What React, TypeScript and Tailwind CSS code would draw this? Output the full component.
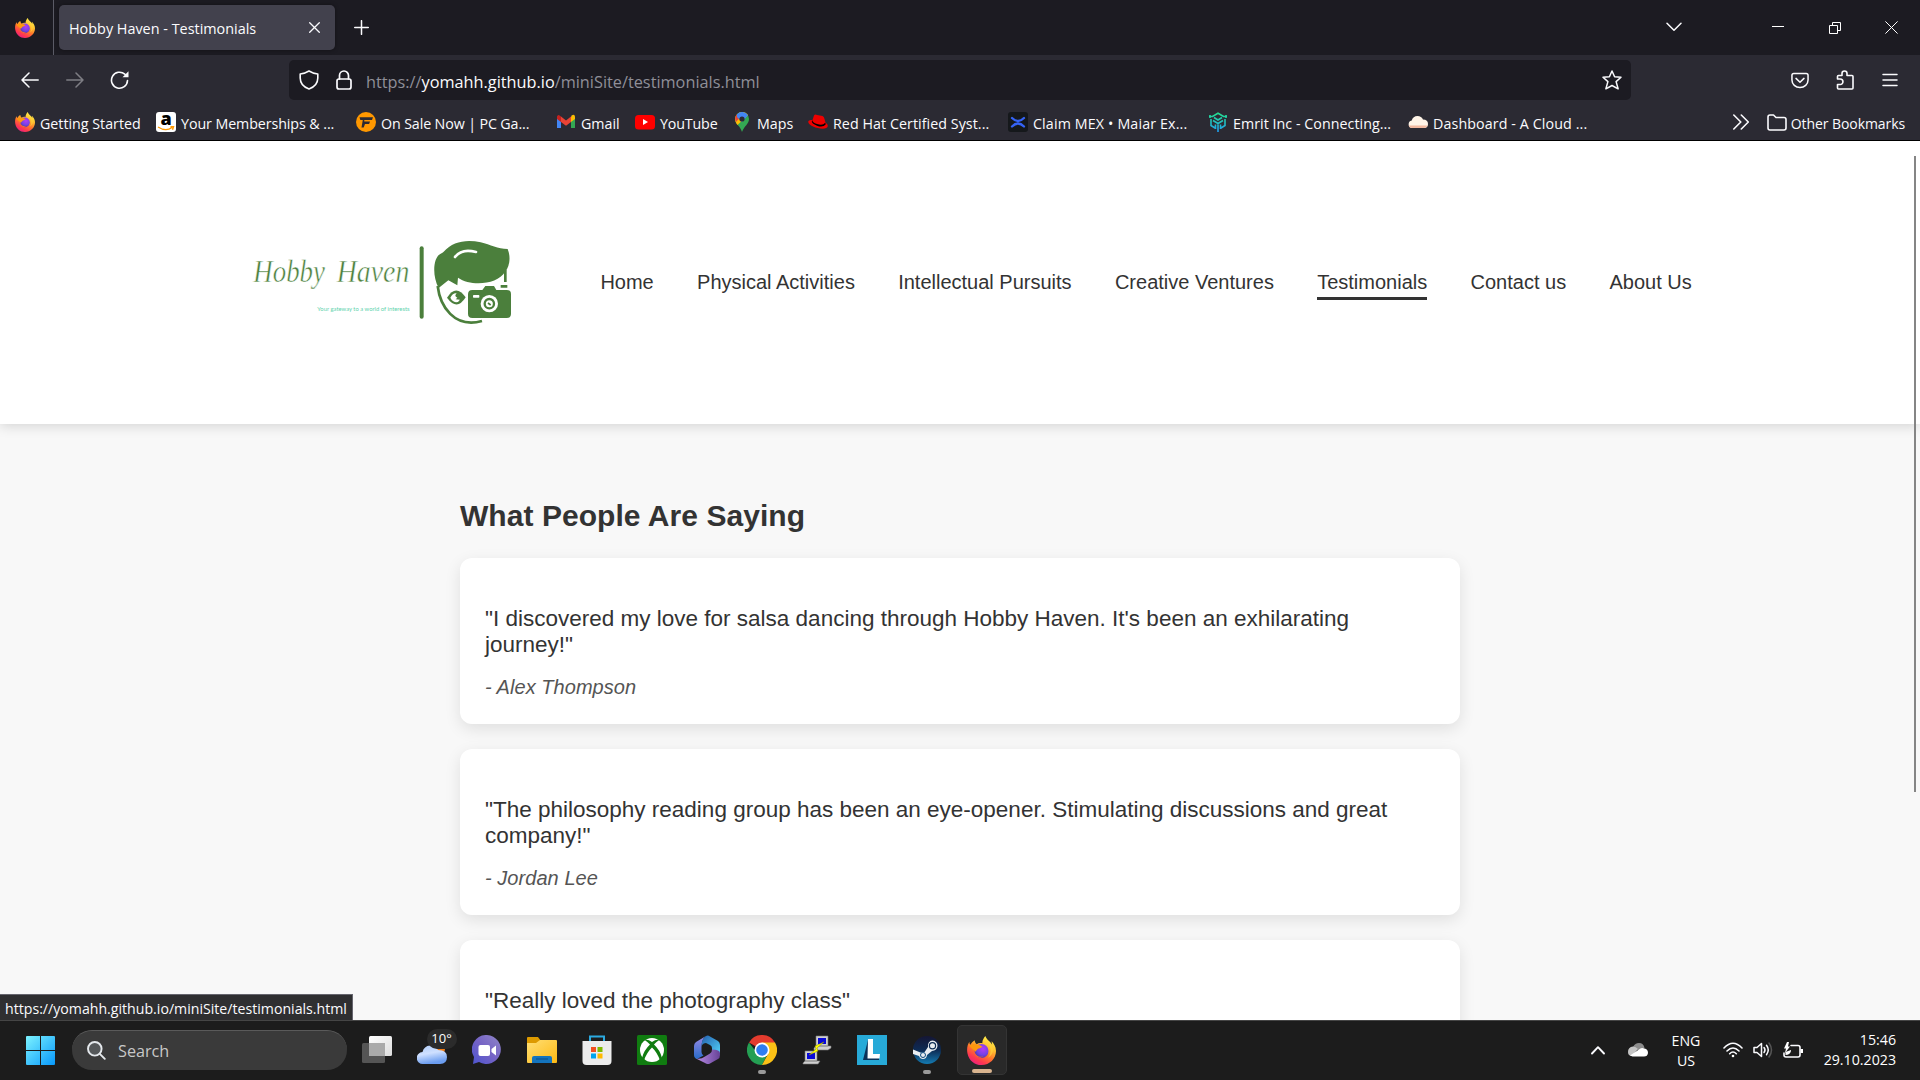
import type { ReactNode } from "react";

function Firefox({ id, className }: { id: string; className: string }) {
  return (
    <svg viewBox="0 0 60 60" className={className}>
      <defs>
        <linearGradient id={id + "a"} x1="0.8" y1="0.05" x2="0.25" y2="1">
          <stop offset="0" stopColor="#fff44f" />
          <stop offset="0.3" stopColor="#ffc02f" />
          <stop offset="0.55" stopColor="#ff7a2a" />
          <stop offset="0.8" stopColor="#ff3750" />
          <stop offset="1" stopColor="#e81e85" />
        </linearGradient>
        <radialGradient id={id + "b"} cx="0.6" cy="0.35" r="0.7">
          <stop offset="0" stopColor="#b43cf5" />
          <stop offset="0.6" stopColor="#7542e5" />
          <stop offset="1" stopColor="#4b3a9e" />
        </radialGradient>
      </defs>
      <path
        d="M38 0C34 5 31 10 32 15C27 14 23 15 20 17C17 15 16 11 16 9C12 11 9 15 7 18C5 17 5 13 5 12C1 18-1 26 1 36C4 50 15 60 30 60C47 60 60 47 60 31C60 22 55 15 51 11C51 14 52 16 52 18C50 12 40 8 38 0Z"
        fill={`url(#${id}a)`}
      />
      <circle cx="30" cy="31" r="14.5" fill={`url(#${id}b)`} />
      <path d="M5 20C11 15 18 16 21 18C27 18 30 21 32 22C29 25 24 25 22 27C21 30 18 30 17 33C16 28 10 28 5 20Z" fill="#ff980e" />
      <path d="M15 30C17 42 27 45 34 42C27 49 14 43 15 30Z" fill="#ff6a2d" />
      <path d="M43 14C51 23 51 37 43 45C56 39 57 24 47 15Z" fill="#ffd43a" opacity=".65" />
    </svg>
  );
}

function Logo() {
  return (
    <svg viewBox="60 45 810 285" className="h-[95px] w-[270px] shrink-0">
      <g fill="#4b7f3c">
        <text x="70" y="187" fontSize="97" fontFamily="Liberation Serif" fontStyle="italic" stroke="#fff" strokeWidth="1.6" textLength="215" lengthAdjust="spacingAndGlyphs">Hobby</text>
        <text x="320" y="187" fontSize="97" fontFamily="Liberation Serif" fontStyle="italic" stroke="#fff" strokeWidth="1.6" textLength="218" lengthAdjust="spacingAndGlyphs">Haven</text>
        <rect x="569" y="79" width="12" height="217" rx="6" />
        <path d="M626 204C606 168 609 112 632 101C636 98 639 98 641 95C668 64 710 57 752 67C782 74 803 87 833 87C843 111 839 140 825 156C803 193 724 201 684 173L682 196L655 181Z" />
        <path d="M822 150h8v36h-8zM812 195h20v8h-20z" />
        <path d="M757 210L766 198H792L799 210H830Q843 210 843 223V281Q843 294 830 294H727Q714 294 714 281V223Q714 210 727 210Z" />
        <path d="M651 233Q678 191 707 232Q681 274 651 233Z" />
      </g>
      <path d="M623 198C630 258 672 326 756 303" fill="none" stroke="#4b7f3c" strokeWidth="8" />
      <path d="M675 111C690 91 716 90 738 96" fill="none" stroke="#fff" strokeWidth="8" strokeLinecap="round" />
      <path d="M661 233Q669 218 680 220Q671 229 682 233L677 238L690 239Q682 252 670 244Q664 240 661 233Z" fill="#fff" />
      <rect x="729" y="225" width="19" height="8" rx="2" fill="#fff" />
      <circle cx="778" cy="251" r="26" fill="#fff" />
      <circle cx="778" cy="251" r="14" fill="none" stroke="#4b7f3c" strokeWidth="7" />
      <path d="M774 249l8 6" stroke="#4b7f3c" strokeWidth="5" />
      <text x="262" y="273" fontSize="17" fontFamily="Lato" fill="#5fd3ae" textLength="277" lengthAdjust="spacingAndGlyphs">Your gateway to a world of interests</text>
    </svg>
  );
}

const line = { fill: "none", stroke: "#fbfbfe", strokeLinecap: "round", strokeLinejoin: "round" } as const;

function TabStrip() {
  return (
    <div className="flex h-[55px] items-center bg-[#1c1b22]">
      <Firefox id="ft" className="ml-[15px] h-5 w-5" />
      <div className="ml-[18px] h-[55px] w-px bg-[#5b5b66]" />
      <div className="ml-[5px] flex h-[45px] w-[276px] items-center rounded-[5px] bg-[#42414d] pl-[10px] shadow-[0_0_4px_rgba(0,0,0,0.4)]">
        <span className="w-[240px] whitespace-nowrap pt-[3px] text-[14.4px]">Hobby Haven - Testimonials</span>
        <svg className="h-[11px] w-[11px]" viewBox="0 0 11 11" {...line} strokeWidth="1.3"><path d="M.7.7l9.6 9.6M10.3.7L.7 10.3" /></svg>
      </div>
      <svg className="ml-[19px] h-[15px] w-[15px]" viewBox="0 0 15 15" {...line} strokeWidth="1.5"><path d="M7.5.7v13.6M.7 7.5h13.6" /></svg>
      <div className="flex-1" />
      <svg className="mr-[90px] h-[10px] w-[16px] -translate-y-px" viewBox="0 0 16 10" {...line} strokeWidth="1.5"><path d="M1 1.3l7 7 7-7" /></svg>
      <div className="mr-[45px] h-px w-3 -translate-y-px bg-white" />
      <svg className="mr-[44px] h-3 w-3" viewBox="0 0 12 12" fill="none" stroke="#fff"><path d="M.5 3.5h8v8h-8zM3.5 3.5v-3h8v8h-3" /></svg>
      <svg className="mr-[22px] h-[13px] w-[13px]" viewBox="0 0 13 13" fill="none" stroke="#fff"><path d="M.4.4l12.2 12.2M12.6.4L.4 12.6" /></svg>
    </div>
  );
}

function Toolbar() {
  return (
    <div className="flex h-[50px] items-center bg-[#2b2a33]">
      <svg className="ml-[21px] h-4 w-[18px]" viewBox="0 0 18 16" {...line} strokeWidth="1.5"><path d="M17.2 8H1M8 1L1 8l7 7" /></svg>
      <svg className="ml-[27px] h-4 w-[18px] opacity-40" viewBox="0 0 18 16" {...line} strokeWidth="1.5"><path d="M.8 8H17M10 1l7 7-7 7" /></svg>
      <svg className="ml-[26px] h-5 w-5" viewBox="0 0 20 20" {...line} strokeWidth="1.6"><path d="M17.5 10.5a8 8 0 1 1-2.7-6.3l2.4 2" /><path d="M18.500 1.300v6h-6z" fill="#fbfbfe" stroke="none" /></svg>
      <div className="ml-[159px] flex h-10 w-[1342px] items-center rounded-[5px] bg-[#1c1b22] pl-[10px]">
        <svg className="h-5 w-5" viewBox="0 0 20 20" {...line} strokeWidth="1.6"><path d="M10 1Q6 3.4 1.2 4V8C1.2 13 4.5 17 10 19C15.500 17 18.800 13 18.800 8V4Q14 3.400 10 1Z" /></svg>
        <svg className="ml-[17px] h-5 w-4" viewBox="0 0 16 20" {...line} strokeWidth="1.7"><rect x="1" y="9" width="14" height="10" rx="2" /><path d="M3.500 9V5.500a4.500 4.500 0 0 1 9 0V9" /></svg>
        <span className="ml-[14px] whitespace-nowrap pt-[5px] text-[16.3px] text-[#8f8f98]">https://<span className="text-[#fbfbfe]">yomahh.github.io</span>/miniSite/testimonials.html</span>
        <div className="flex-1" />
        <svg className="mr-[9px] h-5 w-5" viewBox="0 0 20 20" {...line} strokeWidth="1.5"><path d="M10 1l2.600 5.700 6.400.6-4.900 4.300 2 7.200L10 15.500l-6.100 3.300 2-7.200L1 7.300l6.400-.6z" /></svg>
      </div>
      <svg className="ml-[160px] h-[17px] w-[18px]" viewBox="0 0 19 17" {...line} strokeWidth="1.6"><path d="M3 1h13a2 2 0 0 1 2 2v5a8.500 8 0 0 1-17 0V3a2 2 0 0 1 2-2zM5.300 6.300l4.200 4 4.200-4" /></svg>
      <svg className="ml-[27px] h-5 w-[18px]" viewBox="0 0 18 20" {...line} strokeWidth="1.6"><path d="M1.500 9V6.500Q1.500 5.500 2.500 5.500H6V3.500a2.500 2.500 0 0 1 5 0v2h5Q17 5.500 17 6.500V18Q17 19 16 19H2.500Q1.500 19 1.500 18v-3.500h2.700a2.700 2.700 0 0 0 0-5.500z" /></svg>
      <svg className="ml-[28px] h-[14px] w-4" viewBox="0 0 16 14" {...line} strokeWidth="1.500"><path d="M1 1.500h14M1 7h14M1 12.500h14" /></svg>
    </div>
  );
}

function Bookmark({ width, icon, children }: { width: string; icon: ReactNode; children: ReactNode }) {
  return (
    <div className={"flex shrink-0 items-center whitespace-nowrap text-[14.25px] " + width}>
      <div className="mr-[5px] flex h-5 w-5 shrink-0 items-center justify-center">{icon}</div>
      <span className="pt-[3px]">{children}</span>
    </div>
  );
}

function Bookmarks() {
  return (
    <div className="flex h-9 items-center border-b border-black bg-[#2b2a33] pb-[1px] pl-[15px]">
      <Bookmark width="w-[141px]" icon={<Firefox id="fb" className="h-5 w-5" />}>Getting Started</Bookmark>
      <Bookmark
        width="w-[200px]"
        icon={
          <svg viewBox="0 0 20 20" className="h-5 w-5 overflow-visible">
            <rect width="20" height="20" rx="3" fill="#fff" />
            <text x="10" y="13" fontSize="18" fontWeight="800" fontFamily="Open Sans" textAnchor="middle" fill="#000">a</text>
            <path d="M2 15q8 5 14 .500M14.500 14.800h3l-1 3" fill="none" stroke="#ff9900" strokeWidth="1.400" />
          </svg>
        }
      >
        <span className="tracking-[-0.08px]">Your Memberships &amp; ...</span>
      </Bookmark>
      <Bookmark width="w-[200px]" icon={<svg viewBox="0 0 20 20"><circle cx="10" cy="10" r="10" fill="#ff9800" /><path d="M3.500 5.300h13.500l-1 2.700H8.300v1.600h5.700l-.9 2.500H9L7.700 15.500H5.500L6.800 8H4.300z" fill="#2b2a33" /></svg>}><span className="tracking-[-0.12px]">On Sale Now | PC Ga...</span></Bookmark>
      <Bookmark width="w-[79px]" icon={<svg viewBox="0 0 20 20"><path d="M1 5v11h4V9z" fill="#4285f4" /><path d="M15 9v7h4V5z" fill="#34a853" /><path d="M15 5.300V10l4-3V4.500Q18.500 1.500 15.500 3.500z" fill="#fbbc04" /><path d="M5 4.500V10l5 3.800L15 10V4.500l-5 4z" fill="#ea4335" /><path d="M1 4.500V7l4 3V4.500Q2 1.500 1 4.500z" fill="#c5221f" /></svg>}>Gmail</Bookmark>
      <Bookmark width="w-[97px]" icon={<svg viewBox="0 0 20 20"><rect y="3" width="20" height="14.500" rx="3.500" fill="#f00" /><path d="M8 7v6l5-3z" fill="#fff" /></svg>}><span className="tracking-[-0.15px]">YouTube</span></Bookmark>
      <Bookmark width="w-[76px]" icon={<svg viewBox="0 0 20 20"><path d="M10 0a7 7 0 0 1 7 7c0 5-5 7-7 13C8.500 14 3 12 3 7a7 7 0 0 1 7-7z" fill="#34a853" /><path d="M5 2.500A7 7 0 0 1 16 3L5.500 13C3 10 2 6 5 2.500z" fill="#fbbc04" /><path d="M4.700 2.600L8 5.500 4 10Q2 6 4.700 2.600z" fill="#ea4335" /><path d="M5 2.200A7 7 0 0 1 16 3.300L10 10 5 5z" fill="#4285f4" /><circle cx="10" cy="7" r="2.600" fill="#2b2a33" /></svg>}>Maps</Bookmark>
      <Bookmark width="w-[200px]" icon={<svg viewBox="0 0 20 20"><path d="M4.500 8L6 3.500Q7 2 9 3L14.500 4Q16 4.500 16.500 7L17.500 10.500Q20 12 19.800 14C19 20 0 15 .2 9.500Q.5 7.500 4.500 8z" fill="#e00" /><path d="M4.500 8.200Q4 10.500 9 12Q15 13.800 17.200 10.800L17.800 12.200Q15 16 9 13.700Q3.500 11.500 3.800 9z" fill="#000" /></svg>}><span className="tracking-[0.06px]">Red Hat Certified Syst...</span></Bookmark>
      <Bookmark width="w-[200px]" icon={<svg viewBox="0 0 20 20"><rect width="20" height="20" rx="3" fill="#15181b" /><path d="M4 6q6 6 12 0M4 14.500q6-6 12 0" fill="none" stroke="#3563f5" strokeWidth="2.300" strokeLinecap="round" /></svg>}><span className="tracking-[0.14px]">Claim MEX • Maiar Ex...</span></Bookmark>
      <Bookmark
        width="w-[200px]"
        icon={
          <svg viewBox="0 0 20 20" fill="none" stroke="url(#em)" strokeWidth="1.600">
            <defs><linearGradient id="em" x1="0" y1="0" x2="0" y2="20" gradientUnits="userSpaceOnUse"><stop stopColor="#24e28a" /><stop offset="1" stopColor="#1f9df0" /></linearGradient></defs>
            <path d="M1 4.500h3.500L10 1.300l5.500 3.200H19M2 3v3M18 3v3M6 5.500L10 8l4-2.500M3 7v6.500l4 2.500M17 7v6.500L13 16M5 8.500l5 3 5-3M10 11.500V20M7.500 12.500V17M12.500 12.500V17" />
          </svg>
        }
      >
        <span className="tracking-[0.04px]">Emrit Inc - Connecting...</span>
      </Bookmark>
      <Bookmark width="w-[200px]" icon={<svg viewBox="0 0 20 20"><path d="M4 16a3.800 3.800 0 0 1-.3-7.500Q5 4 9.500 4q4 0 5.500 3.500Q20 7.500 20 12q0 4-4 4z" fill="#fff4e8" /><path d="M.6 13.500h19Q18.500 16 16 16H4Q1.500 16 .6 13.500z" fill="#f2b9a0" /></svg>}><span className="tracking-[0.11px]">Dashboard - A Cloud ...</span></Bookmark>
      <div className="flex-1" />
      <svg className="mr-[18px] h-4 w-4 shrink-0" viewBox="0 0 16 16" {...line} strokeWidth="1.600"><path d="M.8 1l7 7-7 7M8.300 1l7 7-7 7" /></svg>
      <svg className="mr-1 h-[17px] w-[20px] shrink-0" viewBox="0 0 20 17" {...line} strokeWidth="1.600"><path d="M1 3q0-2 2-2h3.500l2.500 2.500h8q2 0 2 2V14q0 2-2 2H3q-2 0-2-2z" /></svg>
      <span className="mr-[15px] whitespace-nowrap pt-[2px] text-[14px] tracking-[-0.08px]">Other Bookmarks</span>
    </div>
  );
}

const navItems = ["Home", "Physical Activities", "Intellectual Pursuits", "Creative Ventures", "Testimonials", "Contact us", "About Us"];

const testimonials = [
  { quote: "\"I discovered my love for salsa dancing through Hobby Haven. It's been an exhilarating journey!\"", author: "- Alex Thompson" },
  { quote: "\"The philosophy reading group has been an eye-opener. Stimulating discussions and great company!\"", author: "- Jordan Lee" },
  { quote: "\"Really loved the photography class\"", author: "" },
];

function Page() {
  return (
    <div className="relative h-[879px] overflow-hidden bg-[#f8f8f8] font-['Liberation_Sans'] text-[#333]">
      <header className="relative flex h-[283px] items-center bg-white pl-[250px] shadow-[0_2px_12px_rgba(0,0,0,0.15)]">
        <Logo />
        <nav className="ml-[80.400px] flex gap-[43.300px] text-[20px] leading-[23px]">
          {navItems.map((n) => (
            <a key={n} className={n === "Testimonials" ? "relative whitespace-nowrap after:absolute after:top-[26px] after:left-0 after:h-[3px] after:w-full after:bg-[#333]" : "whitespace-nowrap"}>{n}</a>
          ))}
        </nav>
      </header>
      <main className="mx-auto w-[1000px] pt-[74px]">
        <h1 className="text-[30px] leading-[35px] font-bold tracking-[0.05px]">What People Are Saying</h1>
        <div className="mt-[25px] flex flex-col gap-[25px]">
          {testimonials.map((t) => (
            <article key={t.quote} className="h-[166px] rounded-[12px] bg-white px-[25px] pt-[48px] shadow-[0_5px_16px_rgba(0,0,0,0.1)]">
              <p className="text-[22.500px] leading-[26px]">{t.quote}</p>
              <p className="mt-[18px] text-[20px] leading-[23px] tracking-[0.05px] text-[#555] italic">{t.author}</p>
            </article>
          ))}
        </div>
      </main>
      <div className="absolute top-[15px] left-[1914px] h-[636px] w-[2px] bg-[#858585]" />
      <div className="absolute bottom-0 left-0 flex h-[26px] w-[353px] items-center border-t border-r border-[#66656e] bg-[#2f2f31] pl-[5px] font-['Open_Sans'] text-[14.150px] whitespace-nowrap text-[#fbfbfe]"><span className="pt-[3px]">https://yomahh.github.io/miniSite/testimonials.html</span></div>
    </div>
  );
}

function TaskItem({ children, active, mark }: { children: ReactNode; active?: boolean; mark?: string }) {
  return (
    <div className="flex w-[55px] shrink-0 justify-center">
      <div className={active ? "relative flex h-[50px] w-[50px] items-center justify-center rounded-[5px] border border-[#343434] bg-[#292929]" : "relative flex h-[50px] w-[50px] items-center justify-center"}>
        {children}
        {mark && <div className={"absolute bottom-px h-1 rounded-full " + mark} />}
      </div>
    </div>
  );
}

function Taskbar() {
  const s = "h-[30px] w-[30px]";
  return (
    <div className="flex h-[60px] items-center border-t border-[#454545] bg-[#1c1c1c] pb-px text-white">
      <svg className="ml-[26px] h-[29px] w-[29px]" viewBox="0 0 29 29"><defs><linearGradient id="win" x2="1" y2="1"><stop stopColor="#7df3ff" /><stop offset="1" stopColor="#0798fb" /></linearGradient></defs><path d="M1 0h13v14H0V1Q0 0 1 0zM15 0h13q1 0 1 1v13H15zM0 15h14v14H1q-1 0-1-1zM15 15h14v13q0 1-1 1H15z" fill="url(#win)" /></svg>
      <div className="ml-[17px] flex h-10 w-[275px] items-center rounded-full border-t border-[#5a5a5a] bg-[#3a3a3a] pl-[15px]">
        <svg className="h-[19px] w-[19px]" viewBox="0 0 19 19" fill="#55585a" stroke="#e4e8ec" strokeWidth="1.900" strokeLinecap="round"><circle cx="7.800" cy="7.800" r="6.800" /><path d="M12.800 12.800l5 5" /></svg>
        <span className="ml-3 pt-[2px] text-[16.200px] text-[#c8c8c8]">Search</span>
      </div>
      <div className="ml-[2px] flex">
        <TaskItem>
          <svg className={s} viewBox="0 0 30 30"><defs><linearGradient id="tv" x2="1" y2="1"><stop stopColor="#fff" /><stop offset="1" stopColor="#ddd" /></linearGradient></defs><rect x="7" y="1" width="23" height="20" rx="1.500" fill="url(#tv)" /><rect y="8" width="23" height="20" rx="1.500" fill="#555" /><path d="M7 8h16v13H7z" fill="#aaa" /></svg>
        </TaskItem>
        <TaskItem>
          <svg className={s} viewBox="0 0 30 30"><defs><linearGradient id="cl" x2="0.300" y2="1"><stop stopColor="#afcbf7" /><stop offset=".5" stopColor="#cfe0ff" /><stop offset="1" stopColor="#6b9df0" /></linearGradient></defs><circle cx="22" cy="14" r="6" fill="#ef7d1a" /><path d="M6 29a6 6 0 0 1-.5-12Q7 11 13 10.500Q19 11 21 15q9 0 9 7t-7 7z" fill="url(#cl)" /></svg>
          <div className="absolute top-[4px] left-[20px] flex h-5 w-[30px] items-center justify-center rounded-full bg-[#2b2b2b] text-[13px]">10°</div>
        </TaskItem>
        <TaskItem>
          <svg className={s} viewBox="0 0 30 30"><defs><linearGradient id="ch" x1="1" x2="0" y2="1"><stop stopColor="#9187c8" /><stop offset=".5" stopColor="#7563c5" /><stop offset="1" stopColor="#4d55d0" /></linearGradient></defs><path d="M15 0a14.500 14.500 0 1 1-8 27L1 29l1-7A14.500 14.500 0 0 1 15 0z" fill="url(#ch)" /><rect x="6.500" y="10" width="11.500" height="11" rx="2" fill="#fff" /><path d="M19.500 14l4.500-3.500v10L19.500 17z" fill="#fff" /></svg>
        </TaskItem>
        <TaskItem>
          <svg className={s} viewBox="0 0 30 30"><defs><linearGradient id="fo" x2="1" y2="1"><stop stopColor="#ffdf75" /><stop offset="1" stopColor="#fdb913" /></linearGradient></defs><path d="M0 3q0-1 1-1h10l3 4v6H0z" fill="#dd9a00" /><path d="M0 8h9l4-3h16q1 0 1 1v21q0 1-1 1H1q-1 0-1-1z" fill="url(#fo)" /><path d="M5 28v-5q0-2 2-2h16q2 0 2 2v5z" fill="#1474bd" /><path d="M9 24h12" stroke="#0a4c87" /></svg>
        </TaskItem>
        <TaskItem>
          <svg className={s} viewBox="0 0 30 30"><path d="M8 7V1.500h14V7" fill="none" stroke="#2ba9df" strokeWidth="2" /><path d="M.5 6h29v20q0 4-4 4h-21q-4 0-4-4z" fill="#ececec" /><path d="M9 12h5v5H9z" fill="#f25022" /><path d="M15.500 12h5v5h-5z" fill="#7fba00" /><path d="M9 18.500h5v5H9z" fill="#00a4ef" /><path d="M15.500 18.500h5v5h-5z" fill="#ffb900" /></svg>
        </TaskItem>
        <TaskItem>
          <svg className={s} viewBox="0 0 30 30"><rect width="30" height="30" rx="1.500" fill="#107c10" /><circle cx="15" cy="15" r="12" fill="#fff" /><path d="M7 4.500Q12 4 15 7Q18 4 23 4.500Q19 7 17 9.500Q23 15 25 23L23 25.500Q20 17 15 12.500Q10 17 7 25.500L5 23Q7 15 13 9.500Q10 6.500 7 4.500z" fill="#107c10" /></svg>
        </TaskItem>
        <TaskItem>
          <svg className={s} viewBox="0 0 30 30"><defs><linearGradient id="m1" x2="0" y2="1"><stop stopColor="#9b8ae6" /><stop offset="1" stopColor="#286bc9" /></linearGradient><linearGradient id="m2" x2="1" y2="1"><stop stopColor="#235fae" /><stop offset="1" stopColor="#54d6fb" /></linearGradient><linearGradient id="m3" x2="1"><stop stopColor="#bb8ee8" /><stop offset="1" stopColor="#664296" /></linearGradient></defs><path d="M14 1L4 7Q2 8.500 2 11V20q0 3 3 4l6.500-3.500Q9.500 19 9.500 17V12Q9.500 4 14 1z" fill="url(#m1)" /><path d="M14 1q2-1 4 .500L26 6q2 1.500 2 4V20L20 16V13q0-2-2-3l-4-2Q11 8 9.500 11Q10 3 14 1z" fill="url(#m2)" /><path d="M28 18v2q0 3-2 4l-8 4.500q-2 1-4 0L4 23.500q5 1 9-2l5-3q2-1 2-4 8 0 8 3.500z" fill="url(#m3)" /></svg>
        </TaskItem>
        <TaskItem mark="w-2 bg-[#9a9a9a]">
          <svg className={s} viewBox="0 0 30 30"><path d="M15 15L2 7.500A15 15 0 0 1 28 7.500z" fill="#e33b2e" /><path d="M2 7.500A15 15 0 0 0 15 30L21 18 10 18z" fill="#249f53" /><path d="M28 7.500H15L21 19 15 30A15 15 0 0 0 28 7.500z" fill="#fbc116" /><circle cx="15" cy="15" r="7.500" fill="#fff" /><circle cx="15" cy="15" r="5.800" fill="#2e7df0" /></svg>
        </TaskItem>
        <TaskItem>
          <svg className={s} viewBox="0 0 30 30"><g fill="#d0d0d0" stroke="#777" strokeWidth=".6"><path d="M14 1h12v10H14zM12 13l2-2h15v2l-3 2H12zM3 16h12v10H3zM1 28l2-2h15l-2 3H1z" /></g><path d="M16 3h8v6h-8zM5 18h8v6H5z" fill="#0808d8" /><path d="M22 7l-9 4 1 3-7 6 9-4-1-3z" fill="#ff0" stroke="#8a8a00" strokeWidth=".5" /></svg>
        </TaskItem>
        <TaskItem>
          <svg className={s} viewBox="0 0 30 30"><path d="M0 0h30v30H0z" fill="#27aad8" /><path d="M11 5L6 25H22V21H11z" fill="#0b3158" /><path d="M11 4h5v15h7l-.500 4.500H10.500z" fill="#fff" /></svg>
        </TaskItem>
        <TaskItem mark="w-2 bg-[#9a9a9a]">
          <svg className={s} viewBox="0 0 30 30"><defs><linearGradient id="st" x2="0" y2="1"><stop stopColor="#151634" /><stop offset=".5" stopColor="#0d2b54" /><stop offset="1" stopColor="#147bb2" /></linearGradient></defs><circle cx="15" cy="15" r="14" fill="url(#st)" /><path d="M1 14.500l8 3.200q2-1 3.500-.500L16 12Q15.500 6 20.500 5.500Q25.500 6 25.500 11Q25 15.500 20 16l-5 4Q14.500 24 11 24 8 24 7 21L1 19z" fill="#e9edf1" /><circle cx="20.500" cy="10.800" r="3.100" fill="#e9edf1" stroke="#0d2b54" strokeWidth="1.200" /><circle cx="11" cy="20" r="2.500" fill="none" stroke="#0d4a7c" /></svg>
        </TaskItem>
        <TaskItem active mark="w-5 bg-[#d9b48f]"><Firefox id="fk" className="h-[29px] w-[29px]" /></TaskItem>
      </div>
      <div className="flex-1" />
      <svg className="mr-[23px] h-[10px] w-[14px]" viewBox="0 0 14 10" {...line} strokeWidth="1.900"><path d="M1 8.500l6-6.300 6 6.300" /></svg>
      <svg className="mr-[18px] h-[14px] w-5" viewBox="0 0 20 14"><path d="M5 4Q7 0 11 0q4.500 0 5.500 5L12 8z" fill="#8c8c8c" /><path d="M0 9Q0 4 5 3.500Q8 3.500 10 6l-6 7Q0 13 0 9z" fill="#c4c4c4" /><path d="M2 12.500L11 6.500Q13 4 16.500 5.500Q20 6 20 10q-.500 3.500-4 3.500H4.500z" fill="#fff" /></svg>
      <div className="w-10 pt-px text-center text-[14.200px] leading-5">ENG<br />US</div>
      <svg className="ml-[17px] h-4 w-5" viewBox="0 0 20 16" {...line} strokeWidth="1.600"><path d="M1 6q9-9.500 18 0M4 9q6-6 12 0M6.700 11.700q3.300-3.300 6.600 0" /><circle cx="10" cy="14" r="1.300" fill="#fff" stroke="none" /></svg>
      <svg className="ml-[10px] h-4 w-5" viewBox="0 0 20 16" {...line} strokeWidth="1.500"><path d="M1 5.500h3L8.500 1.500v13L4 10.500H1zM11 5.500q2 2.500 0 5M13.500 3.300q3.500 4.700 0 9.400" /><path d="M16 1q5 7 0 14" stroke="#555" /></svg>
      <svg className="ml-[10px] h-[17px] w-5" viewBox="0 0 20 17" {...line} strokeWidth="1.600"><path d="M8 3.500h7q2 0 2 2V13q0 2-2 2H3q-2 0-2-2v-2" /><path d="M17.500 7h2.500v4h-2.500zM4 0L1 6.500h2L2 11 7 4.500H5L6 0zM2.500 13V10L8 8v1q-1 4-5.500 4z" fill="#fff" stroke="none" /></svg>
      <div className="mr-6 w-[93px] text-right text-[14.200px] leading-5">15:46<br />29.10.2023</div>
    </div>
  );
}

export default function App() {
  return (
    <div className="h-[1080px] w-[1920px] overflow-hidden bg-[#1c1b22] font-['Open_Sans',sans-serif] text-[#fbfbfe]">
      <TabStrip />
      <Toolbar />
      <Bookmarks />
      <Page />
      <Taskbar />
    </div>
  );
}
